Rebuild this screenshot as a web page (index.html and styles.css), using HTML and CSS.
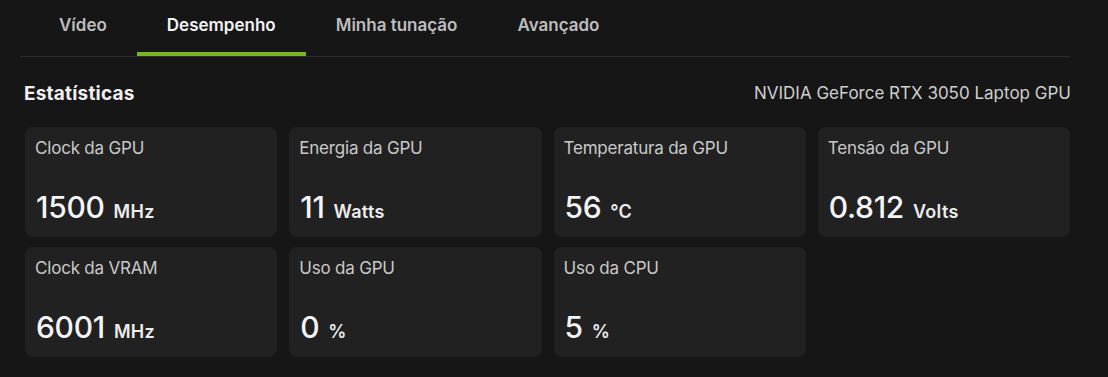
FILE: index.html
```html
<!DOCTYPE html>
<html lang="pt">
<head>
<meta charset="utf-8">
<link rel="stylesheet" href="styles.css">
</head>
<body>
<div class="page">
  <nav class="tabs">
    <div class="tab">Vídeo</div>
    <div class="tab active">Desempenho</div>
    <div class="tab">Minha tunação</div>
    <div class="tab">Avançado</div>
  </nav>
  <section class="stats">
    <header class="stats-head">
      <h2 class="title">Estatísticas</h2>
      <div class="gpu-name">NVIDIA GeForce RTX 3050 Laptop GPU</div>
    </header>
    <div class="grid">
      <div class="card"><div class="label">Clock da GPU</div><div class="value"><span class="num">1500</span><span class="unit">MHz</span></div></div>
      <div class="card"><div class="label">Energia da GPU</div><div class="value"><span class="num">11</span><span class="unit">Watts</span></div></div>
      <div class="card"><div class="label">Temperatura da GPU</div><div class="value"><span class="num">56</span><span class="unit">°C</span></div></div>
      <div class="card"><div class="label">Tensão da GPU</div><div class="value"><span class="num">0.812</span><span class="unit">Volts</span></div></div>
      <div class="card"><div class="label">Clock da VRAM</div><div class="value"><span class="num">6001</span><span class="unit">MHz</span></div></div>
      <div class="card"><div class="label">Uso da GPU</div><div class="value"><span class="num">0</span><span class="unit">%</span></div></div>
      <div class="card"><div class="label">Uso da CPU</div><div class="value"><span class="num">5</span><span class="unit">%</span></div></div>
    </div>
  </section>
</div>
</body>
</html>
```
FILE: styles.css
```css
html, body {
  margin: 0;
  padding: 0;
  background: #161616;
  height: 100%;
}
body {
  font-family: "Inter", "Noto Sans", sans-serif;
  color: #e6e6e6;
}
.page {
  padding: 0 38px 0 20px;
}
.tabs {
  display: flex;
  border-bottom: 1px solid #2c2c2c;
  padding-left: 9px;
  height: 57px;
  box-sizing: border-box;
}
.tab {
  padding: 15px 30px 0;
  height: 56px;
  font-size: 17px;
  font-weight: 600;
  color: #bdbdbd;
  box-sizing: border-box;
  border-bottom: 4px solid transparent;
}
.tab.active {
  color: #f2f2f2;
  border-bottom-color: #78b423;
}
.stats {
  padding-left: 5px;
}
.stats-head {
  display: flex;
  justify-content: space-between;
  align-items: center;
  height: 70px;
}
.title {
  margin: 3px 0 0 -1px;
  font-size: 19px;
  font-weight: 700;
  color: #f0f0f0;
  letter-spacing: 0.2px;
}
.gpu-name {
  margin-top: 1px;
  font-size: 17px;
  color: #cfcfcf;
  margin-right: -1px;
}
.grid {
  display: grid;
  grid-template-columns: repeat(4, 1fr);
  gap: 10px 12px;
}
.card {
  background: #212121;
  border-radius: 8px;
  height: 110px;
  padding: 11px 10px 0;
  box-sizing: border-box;
  display: flex;
  flex-direction: column;
}
.label {
  font-size: 17px;
  color: #c9c9c9;
  letter-spacing: -0.2px;
}
.value {
  margin-top: 31px;
  display: flex;
  align-items: baseline;
  gap: 9px;
  padding-left: 1px;
}
.num {
  font-size: 30px;
  font-weight: 500;
  color: #f4f4f4;
  letter-spacing: -0.3px;
}
.unit {
  font-size: 18px;
  font-weight: 600;
  color: #ececec;
  letter-spacing: 0.3px;
}
```
